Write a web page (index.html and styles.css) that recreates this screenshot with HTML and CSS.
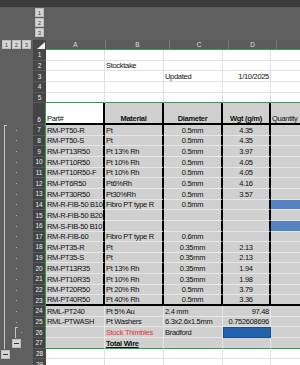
FILE: index.html
```html
<!DOCTYPE html>
<html lang="en">

<head>
    <meta charset="UTF-8">
    <title>Stocktake</title>
    <link rel="stylesheet" href="styles.css">
</head>

<body>

    <div class="topbar"></div>

    <!-- column outline levels -->
    <div class="colol">
        <div class="lvlcol">
            <span class="btn">1</span>
            <span class="btn">2</span>
            <span class="btn">3</span>
        </div>
    </div>

    <!-- column headers -->
    <div class="hdr">
        <div class="ol lvlrow">
            <span class="btn">1</span>
            <span class="btn">2</span>
            <span class="btn">3</span>
        </div>
        <div class="corner">
            <svg width="8" height="7" viewBox="0 0 8 7"><polygon points="8,0 8,7 0,7" fill="#f2f2f2"/></svg>
        </div>
        <div class="ch a">A</div>
        <div class="ch b">B</div>
        <div class="ch c">C</div>
        <div class="ch d">D</div>
        <div class="ch e">E</div>
    </div>

    <div class="sheet">
        <div class="row"><div class="ol"></div><div class="rh">1</div><div class="c a"></div><div class="c b"></div><div class="c c"></div><div class="c d"></div><div class="c e"></div></div>
        <div class="row"><div class="ol"></div><div class="rh">2</div><div class="c a"></div><div class="c b">Stocktake</div><div class="c c"></div><div class="c d"></div><div class="c e"></div></div>
        <div class="row"><div class="ol"></div><div class="rh">3</div><div class="c a"></div><div class="c b"></div><div class="c c">Updated</div><div class="c d r">1/10/2025</div><div class="c e"></div></div>
        <div class="row"><div class="ol"></div><div class="rh">4</div><div class="c a"></div><div class="c b"></div><div class="c c"></div><div class="c d"></div><div class="c e"></div></div>
        <div class="row sel-before"><div class="ol"></div><div class="rh">5</div><div class="c a"></div><div class="c b"></div><div class="c c"></div><div class="c d"></div><div class="c e"></div></div>

        <div class="row tall sel boxed head">
            <div class="ol"></div><div class="rh">6</div>
            <div class="c a">Part#</div>
            <div class="c b g bold mid">Material</div>
            <div class="c c g bold mid">Diameter</div>
            <div class="c d g bold mid">Wgt (g/m)</div>
            <div class="c e g">Quantity</div>
        </div>

        <div class="row sel boxed gray"><div class="ol"><i class="s1 line top"></i><i class="s2"><b class="dot"></b></i></div><div class="rh">7</div><div class="c a">RM-PT50-R</div><div class="c b">Pt</div><div class="c c mid">0.5mm</div><div class="c d mid">4.35</div><div class="c e"></div></div>
        <div class="row sel boxed gray"><div class="ol"><i class="s1 line"></i><i class="s2"><b class="dot"></b></i></div><div class="rh">8</div><div class="c a">RM-PT50-S</div><div class="c b">Pt</div><div class="c c mid">0.5mm</div><div class="c d mid">4.35</div><div class="c e"></div></div>
        <div class="row sel boxed gray"><div class="ol"><i class="s1 line"></i><i class="s2"><b class="dot"></b></i></div><div class="rh">9</div><div class="c a">RM-PT13R50</div><div class="c b">Pt 13% Rh</div><div class="c c mid">0.5mm</div><div class="c d mid">3.97</div><div class="c e"></div></div>
        <div class="row sel boxed gray"><div class="ol"><i class="s1 line"></i><i class="s2"><b class="dot"></b></i></div><div class="rh">10</div><div class="c a">RM-PT10R50</div><div class="c b">Pt 10% Rh</div><div class="c c mid">0.5mm</div><div class="c d mid">4.05</div><div class="c e"></div></div>
        <div class="row sel boxed gray"><div class="ol"><i class="s1 line"></i><i class="s2"><b class="dot"></b></i></div><div class="rh">11</div><div class="c a">RM-PT10R50-F</div><div class="c b">Pt 10% Rh</div><div class="c c mid">0.5mm</div><div class="c d mid">4.05</div><div class="c e"></div></div>
        <div class="row sel boxed gray"><div class="ol"><i class="s1 line"></i><i class="s2"><b class="dot"></b></i></div><div class="rh">12</div><div class="c a">RM-PT6R50</div><div class="c b">Pt6%Rh</div><div class="c c mid">0.5mm</div><div class="c d mid">4.16</div><div class="c e"></div></div>
        <div class="row sel boxed gray"><div class="ol"><i class="s1 line"></i><i class="s2"><b class="dot"></b></i></div><div class="rh">13</div><div class="c a">RM-PT30R50</div><div class="c b">Pt30%Rh</div><div class="c c mid">0.5mm</div><div class="c d mid">3.57</div><div class="c e"></div></div>
        <div class="row sel boxed gray"><div class="ol"><i class="s1 line"></i><i class="s2"><b class="dot"></b></i></div><div class="rh">14</div><div class="c a">RM-R-FIB-50 B10</div><div class="c b">Fibro PT type R</div><div class="c c mid">0.5mm</div><div class="c d mid"></div><div class="c e blue"></div></div>
        <div class="row sel boxed gray"><div class="ol"><i class="s1 line"></i><i class="s2"><b class="dot"></b></i></div><div class="rh">15</div><div class="c a">RM-R-FIB-50 B20</div><div class="c b"></div><div class="c c mid"></div><div class="c d mid"></div><div class="c e"></div></div>
        <div class="row sel boxed gray"><div class="ol"><i class="s1 line"></i><i class="s2"><b class="dot"></b></i></div><div class="rh">16</div><div class="c a">RM-S-FIB-50 B10</div><div class="c b"></div><div class="c c mid"></div><div class="c d mid"></div><div class="c e blue"></div></div>
        <div class="row sel boxed gray"><div class="ol"><i class="s1 line"></i><i class="s2"><b class="dot"></b></i></div><div class="rh">17</div><div class="c a">RM-R-FIB-60</div><div class="c b">Fibro PT type R</div><div class="c c mid">0.6mm</div><div class="c d mid"></div><div class="c e"></div></div>
        <div class="row sel boxed gray"><div class="ol"><i class="s1 line"></i><i class="s2"><b class="dot"></b></i></div><div class="rh">18</div><div class="c a">RM-PT35-R</div><div class="c b">Pt</div><div class="c c mid">0.35mm</div><div class="c d mid">2.13</div><div class="c e"></div></div>
        <div class="row sel boxed gray"><div class="ol"><i class="s1 line"></i><i class="s2"><b class="dot"></b></i></div><div class="rh">19</div><div class="c a">RM-PT35-S</div><div class="c b">Pt</div><div class="c c mid">0.35mm</div><div class="c d mid">2.13</div><div class="c e"></div></div>
        <div class="row sel boxed gray"><div class="ol"><i class="s1 line"></i><i class="s2"><b class="dot"></b></i></div><div class="rh">20</div><div class="c a">RM-PT13R35</div><div class="c b">Pt 13% Rh</div><div class="c c mid">0.35mm</div><div class="c d mid">1.94</div><div class="c e"></div></div>
        <div class="row sel boxed gray"><div class="ol"><i class="s1 line"></i><i class="s2"><b class="dot"></b></i></div><div class="rh">21</div><div class="c a">RM-PT10R35</div><div class="c b">Pt 10% Rh</div><div class="c c mid">0.35mm</div><div class="c d mid">1.98</div><div class="c e"></div></div>
        <div class="row sel boxed gray"><div class="ol"><i class="s1 line"></i><i class="s2"><b class="dot"></b></i></div><div class="rh">22</div><div class="c a">RM-PT20R50</div><div class="c b">Pt 20% Rh</div><div class="c c mid">0.5mm</div><div class="c d mid">3.79</div><div class="c e"></div></div>
        <div class="row sel boxed gray last"><div class="ol"><i class="s1 line"></i><i class="s2"><b class="dot"></b></i></div><div class="rh">23</div><div class="c a">RM-PT40R50</div><div class="c b">Pt 40% Rh</div><div class="c c mid">0.5mm</div><div class="c d mid">3.36</div><div class="c e"></div></div>
        <div class="row sel gray"><div class="ol"><i class="s1 line"></i><i class="s2"><b class="dot"></b></i></div><div class="rh">24</div><div class="c a">RML-PT240</div><div class="c b">Pt 5% Au</div><div class="c c">2.4 mm</div><div class="c d r">97.48</div><div class="c e"></div></div>
        <div class="row sel gray"><div class="ol"><i class="s1 line"></i><i class="s2"><b class="dot"></b></i></div><div class="rh">25</div><div class="c a">RML-PTWASH</div><div class="c b">Pt Washers</div><div class="c c">6.3x2.6x1.5mm</div><div class="c d r">0.752608696</div><div class="c e"></div></div>
        <div class="row sel gray"><div class="ol"><i class="s1 line"></i><i class="s2 line top"></i><i class="s3"><b class="dot"></b></i></div><div class="rh">26</div><div class="c a"></div><div class="c b red">Stock Thimbles</div><div class="c c">Bradford</div><div class="c d navy"></div><div class="c e"></div></div>
        <div class="row sel gray sel-end"><div class="ol"><i class="s1 line"></i><i class="s2"><span class="btn minus"></span></i></div><div class="rh">27</div><div class="c a"></div><div class="c b bold ul">Total Wire</div><div class="c c"></div><div class="c d"></div><div class="c e"></div></div>
        <div class="row"><div class="ol"><i class="s1"><span class="btn minus"></span></i></div><div class="rh">28</div><div class="c a"></div><div class="c b"></div><div class="c c"></div><div class="c d"></div><div class="c e"></div></div>
        <div class="row"><div class="ol"></div><div class="rh">29</div><div class="c a"></div><div class="c b"></div><div class="c c"></div><div class="c d"></div><div class="c e"></div></div>
    </div>

</body>

</html>
```

FILE: styles.css
```css
body {
    margin: 0;
    width: 300px;
    height: 365px;
    overflow: hidden;
    background-color: #5f5f5f;
    font-family: "Liberation Sans", Arial, sans-serif;
}

.topbar {
    height: 7px;
    background-color: #3b3b3b;
}

.colol {
    height: 33px;
    padding-left: 35px;
    box-sizing: border-box;
}

.lvlcol {
    display: flex;
    flex-direction: column;
    gap: 1px;
    padding-top: 1px;
    width: 9px;
}

.btn {
    display: flex;
    align-items: center;
    justify-content: center;
    width: 9px;
    height: 9px;
    background-color: #d6d6d6;
    color: #3a3a3a;
    font-size: 6px;
    box-sizing: border-box;
    border: 1px solid #bdbdbd;
}

.minus::before {
    content: "";
    width: 5px;
    height: 1px;
    background-color: #333;
}

/* header row */

.hdr {
    display: flex;
    height: 10px;
    width: 360px;
}

.lvlrow {
    display: flex;
    gap: 1px;
    padding-left: 2px;
    box-sizing: border-box;
}

.lvlrow .btn {
    width: 9px;
    height: 9px;
}

.corner {
    width: 13px;
    flex: none;
    background-color: #474747;
    display: flex;
    align-items: flex-end;
    justify-content: flex-end;
    padding: 0 1px 1px 0;
    box-sizing: border-box;
}

.ch {
    box-sizing: border-box;
    color: #dcdcdc;
    font-size: 6.5px;
    display: flex;
    align-items: center;
    justify-content: center;
    border-right: 1px solid #777;
    border-bottom: 1px solid #2f9a5e;
    background-color: #5c5c5c;
}

/* columns */

.a { width: 60px; flex: none; }
.b { width: 64px; flex: none; }
.c { width: 59px; flex: none; }
.d { width: 48px; flex: none; }
.e { width: 60px; flex: none; }

/* rows */

.row {
    display: flex;
    height: 10.667px;
    width: 360px;
}

.row.tall {
    height: 21.667px;
}

.ol {
    width: 33px;
    flex: none;
    display: flex;
}

.ol i {
    display: flex;
    align-items: center;
    height: 100%;
    box-sizing: border-box;
}

.ol .s1 { width: 10px; padding-left: 1px; }
.ol .s2 { width: 11px; padding-left: 2px; }
.ol .s3 { width: 11px; padding-left: 4px; }

.ol .s1.line {
    border-left: 1px solid #c4c4c4;
    margin-left: 4px;
    width: 6px;
}

.ol .s2.line {
    border-left: 1px solid #c4c4c4;
    margin-left: 5px;
    width: 6px;
}

.ol .line.top {
    border-top: 1px solid #c4c4c4;
    width: 3px;
    margin-right: 3px;
}

.ol .s2.line.top {
    margin-right: 0;
}

.ol .s1.line + .s2 {
    padding-left: 2px;
}

.ol .s1.line + .s2 .dot {
    margin-left: 4px;
}

.ol .s2.line.top + .s3 {
    padding-left: 0;
    margin-left: 3px;
}

.dot {
    width: 1px;
    height: 1px;
    background-color: #b0b0b0;
}

.rh {
    width: 13px;
    flex: none;
    box-sizing: border-box;
    background-color: #474747;
    border-bottom: 1px solid #5a5a5a;
    color: #ececec;
    font-size: 6.5px;
    display: flex;
    align-items: center;
    justify-content: center;
}

.tall .rh {
    align-items: flex-end;
    padding-bottom: 1px;
}

.sel .rh {
    border-right: 1px solid #2f9a5e;
    background-color: #434343;
}

.row > .c {
    box-sizing: border-box;
    background-color: #fff;
    border-right: 1px solid #e1e1e1;
    border-bottom: 1px solid #e1e1e1;
    padding: 0 1px;
    font-size: 7.5px;
    letter-spacing: -0.3px;
    line-height: 9px;
    color: #111;
    white-space: nowrap;
    overflow: hidden;
    display: flex;
    align-items: flex-end;
}

.row > .c.r { justify-content: flex-end; }
.row > .c.mid { justify-content: center; }

.gray > .c,
.row > .c.g {
    background-color: #d0d0d0;
    border-right-color: #e6e6e6;
    border-bottom-color: #e6e6e6;
}

.sel-before > .c {
    border-bottom-color: #2f9a5e;
}

.row.sel-end > .c {
    border-bottom-color: #2f9a5e;
}

/* table outline */

.boxed > .c.a,
.boxed > .c.b,
.boxed > .c.c,
.boxed > .c.d {
    border-right: 2px solid #000;
}

.head > .c.b,
.head > .c.c,
.head > .c.d,
.last > .c.b,
.last > .c.c,
.last > .c.d {
    border-bottom: 2px solid #000;
}

.row > .c.bold { font-weight: bold; }
.row > .c.ul { text-decoration: underline; }
.row > .c.red { color: #e0363a; }

.row > .c.blue { background-color: #5683bf; }
.row > .c.navy { background-color: #2361ad; border: 1px solid #1a4f8f; }
```
